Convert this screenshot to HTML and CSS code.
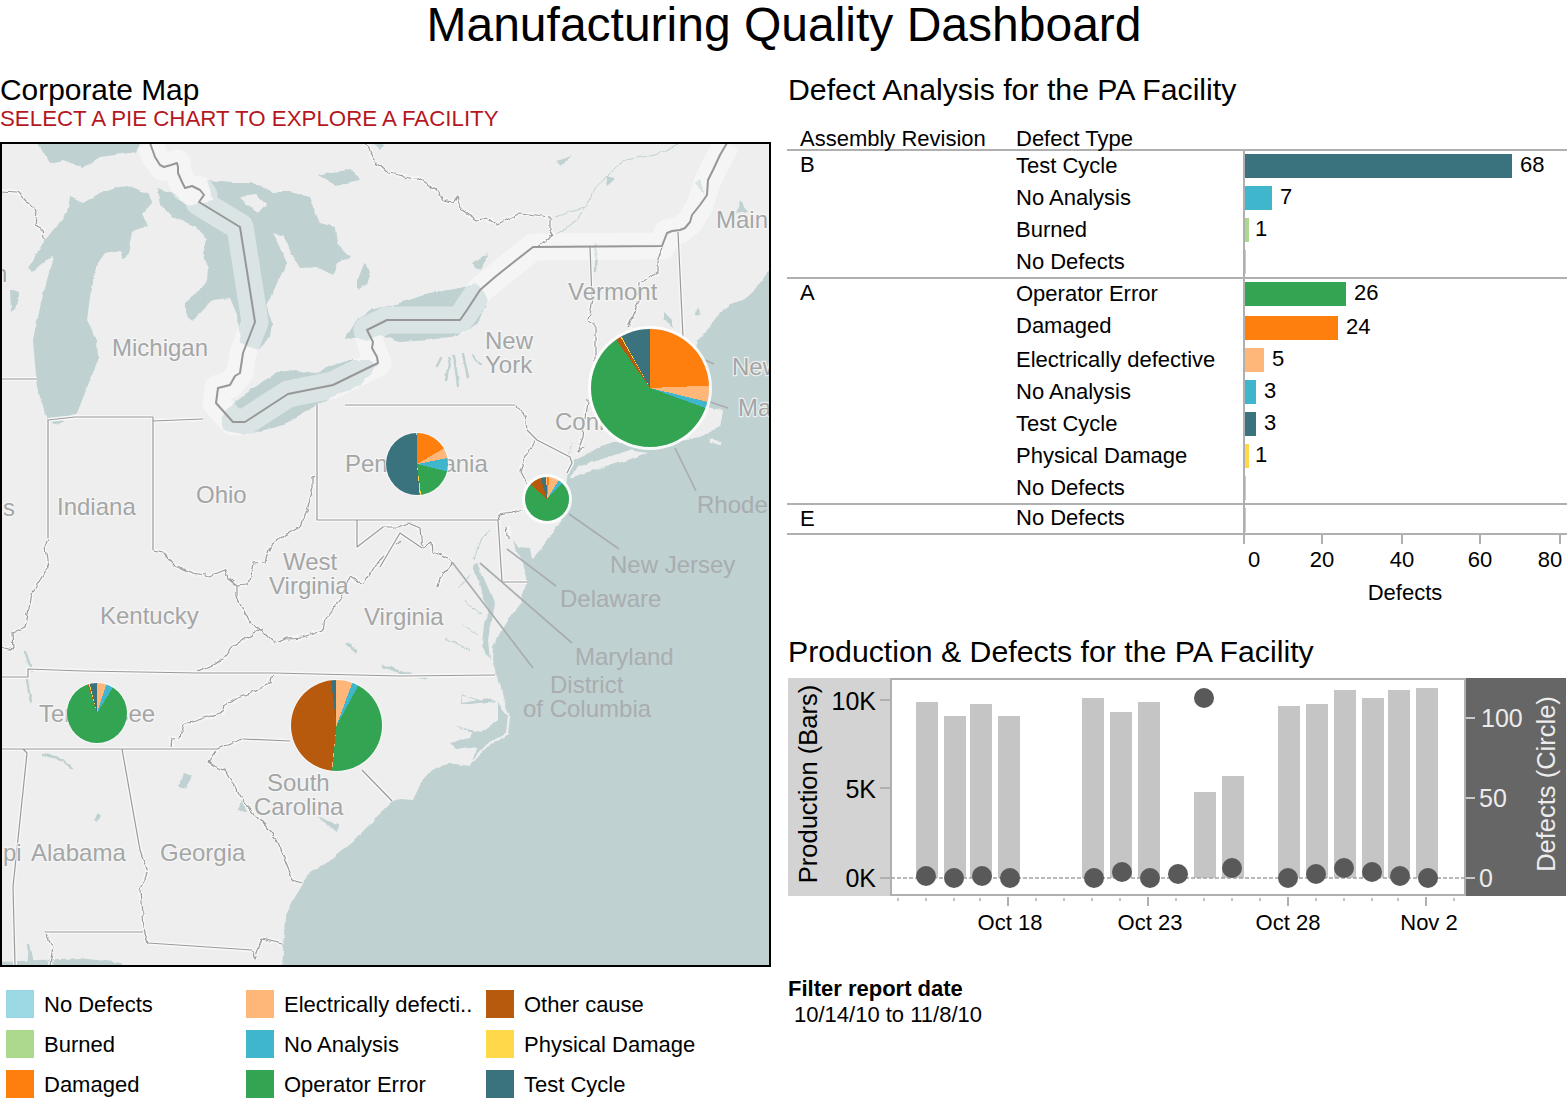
FILE: index.html
```html
<!DOCTYPE html>
<html lang="en">
<head>
<meta charset="utf-8">
<title>Manufacturing Quality Dashboard</title>
<link rel="stylesheet" href="styles.css">
</head>
<body>
<h1 class="page-title">Manufacturing Quality Dashboard</h1>
<main class="dashboard">
  <section class="left">
    <h2 class="section-title">Corporate Map</h2>
    <p class="subtitle">SELECT A PIE CHART TO EXPLORE A FACILITY</p>
    <div class="map">
      <svg class="map-svg" viewBox="2 144 767 821" width="767" height="821" aria-label="Map">
        <defs>
          <filter id="wiggle" filterUnits="userSpaceOnUse" x="-10" y="130" width="790" height="850">
            <feTurbulence type="fractalNoise" baseFrequency="0.11" numOctaves="2" seed="4"/>
            <feDisplacementMap in="SourceGraphic" scale="6" xChannelSelector="R" yChannelSelector="G"/>
          </filter>
          <filter id="wiggle-soft" filterUnits="userSpaceOnUse" x="-10" y="130" width="790" height="850">
            <feTurbulence type="fractalNoise" baseFrequency="0.09" numOctaves="3" seed="9"/>
            <feDisplacementMap in="SourceGraphic" scale="4" xChannelSelector="R" yChannelSelector="G"/>
          </filter>
        </defs>
        <rect class="land" x="0" y="140" width="775" height="830"/>
        <g class="soft">
          <path class="water" d="M775,268 L768,272 L757,287 L743,300 L733,303 L723,310 L716,320 L710,327 L697,340 L700,370 L705,407 L723,410 L720,427 L700,437 L680,440 L640,440 L625,443 L607,443 L570,463 L567,478 L562,520 L553,533 L540,550 L532,559 L530,548 L520,547 L513,542 L518,552 L523,563 L527,583 L520,603 L503,627 L493,647 L492,660 L503,697 L510,717 L508,735 L487,747 L470,766 L450,763 L435,768 L420,785 L413,800 L400,799 L392,802 L377,817 L367,827 L353,842 L333,858 L310,873 L295,897 L285,917 L282,970 L780,970 L780,268 Z"/>
          <path class="land" d="M570,478 L577,467 L630,450 L647,453 L625,461 L600,468 Z M708,439 L722,441 L721,444 L710,443 Z"/>
          <!-- Lake Superior and small northern lakes -->
          <path class="water" d="M38,143 L140,143 L137,152 L100,157 L83,168 L63,160 L50,163 Z M373,143 L385,143 L380,150 Z M10,290 L19,293 L15,310 L11,312 Z"/>
          <!-- Lake Michigan -->
          <path class="water" d="M70,197 L67,212 L43,243 L28,268 L33,272 L53,255 L47,280 L40,307 L33,340 L37,387 L47,420 L57,425 L77,413 L98,360 L97,340 L87,320 L90,297 L98,263 L105,253 L120,250 L123,260 L128,253 L132,232 L148,225 L142,215 L153,203 L147,193 L127,185 L100,193 L83,203 Z"/>
          <!-- Lake Huron -->
          <path class="water" d="M157,188 L173,193 L187,205 L213,200 L207,180 L233,182 L253,182 L273,192 L290,192 L310,197 L320,223 L335,227 L337,243 L350,257 L337,263 L333,275 L317,267 L300,268 L293,257 L285,237 L273,233 L287,263 L277,283 L267,307 L272,323 L270,337 L257,350 L240,343 L238,317 L230,298 L213,300 L203,310 L193,322 L185,313 L185,303 L197,293 L207,280 L208,267 L203,253 L207,240 L197,227 L173,217 L160,205 Z"/>
          <path class="land" d="M240,197 L256,195 L266,204 L258,213 L248,206 Z"/>
          <path class="water" d="M318,175 L330,172 L352,170 L360,180 L345,183 L335,185 Z M358,280 L365,262 L370,275 L367,285 L358,290 Z"/>
          <!-- Lake Erie -->
          <path class="water" d="M232,405 L257,385 L278,372 L295,370 L315,373 L345,360 L368,360 L378,365 L360,385 L330,398 L317,405 L283,425 L245,435 L222,430 L222,418 Z"/>
          <!-- Lake Ontario -->
          <path class="water" d="M345,338 L355,322 L370,310 L400,303 L430,293 L460,288 L477,283 L488,300 L477,325 L457,336 L430,340 L400,342 L380,335 L367,340 Z"/>
          <!-- Inland lakes -->
          <path class="water" d="M482,270 L488,253 L472,263 L474,268 Z M605,176 L615,178 L607,185 Z M572,156 L560,165 L555,160 Z M664,312 L672,320 L672,328 L664,318 Z M700,180 L705,195 L695,184 Z M740,200 L748,212 L736,214 Z M697,307 L702,315 L696,314 Z M178,786 L184,773 L192,776 L186,788 Z M93,820 L98,813 L102,816 L96,822 Z M318,817 L328,822 L338,824 L337,832 L328,826 Z M237,811 L243,800 L247,812 Z"/>
          <path class="water" d="M473,565 L477,563 L489,590 L495,605 L491,625 L488,640 L490,660 L482,645 L484,625 L488,610 L481,590 Z"/>
          <path class="water" d="M498,703 L508,715 L506,733 L487,744 L472,760 L477,748 L470,747 L457,750 L450,743 L470,738 L472,733 L452,725 L470,730 L483,732 L498,720 Z M462,690 L463,703 L487,698 L497,703 L487,702 L470,704 L462,704 Z M0,962 L40,960 L80,958 L122,963 L120,970 L0,970 Z M27,962 L30,945 L34,962 Z"/>
          <path class="stream" d="M437,366 L441,358 M446,380 L450,358 M458,385 L454,356 M468,378 L463,354 M480,364 L472,356 M590,248 L590,275 M596,245 L595,272 M25,652 L32,672 M27,680 L31,702 M43,755 L60,758 L72,768 M383,666 L400,672 L425,678 M347,644 L356,652 M28,945 L32,965"/>
          <path class="stream-thin" d="M555,217 L570,212 L585,208 M555,235 L575,222 L585,208 L597,185 L625,160 L655,155 L680,143 M568,456 L572,443 M490,530 L480,540 L474,560 M470,575 L458,588 M465,600 L482,615 M445,638 L470,650 M462,625 L478,635 M462,695 L478,700"/>
        </g>
        <!-- International border glow -->
        <path class="intl-glow" d="M150,143 L155,157 L163,167 L177,163 L178,173 L185,188 L200,190 L204,195 L199,202 L240,227 L255,322 L243,353 L240,373 L230,385 L218,388 L216,403 L233,422 L245,422 L288,394 L333,385 L378,363 L372,348 L367,330 L387,320 L460,320 L480,290 L533,247 L662,246 L667,233 L680,230 L690,222 L700,205 L708,180 L713,170 L727,143"/>
        <!-- River state borders -->
        <g class="wavy">
          <path class="state-glow" d="M48,538 L45,547 L48,567 L32,593 L28,615 L25,627 L12,633 L13,650 L0,647 M153,550 L163,552 L175,565 L193,573 L210,576 L225,570 L228,578 L237,585 L248,584 L253,563 L265,562 L270,547 L282,537 L300,527 L307,510 L313,488 L313,477 L317,476 M515,405 L525,415 L527,430 M537,438 L525,457 L520,472 L527,485 M498,520 L500,515 L513,513 L523,510 M507,527 L508,537 M383,527 L398,527 L408,523 L420,528 L422,548 M400,540 L375,565 L363,585 L350,577 L340,598 L325,620 L323,630 L303,637 L287,638 L275,643 L262,630 L250,623 L237,597 V585 M262,628 L233,647 L223,660 L197,672 M422,548 L432,542 L433,552 L448,558 L452,563 L440,577 L438,587 M273,673 L270,683 L250,693 L227,703 L223,712 L183,725 L180,737 L172,738 L171,748 M217,749 L208,762 L227,773 L240,797 L263,823 L277,840 L293,880 L302,883 M217,749 L243,739 M140,850 L148,873 L140,890 L143,927 L148,943 M252,950 L255,959 L258,950 L262,939 L282,944 M45,932 L53,947 L50,965 M365,143 L377,163 L388,173 L417,178 L437,190 L443,200 L453,202 L457,198 L462,210 L477,220 L487,218 L497,225 L520,213 L550,217 V230 L553,235 L537,247 M0,191 L17,192 L27,202 L37,212 L35,225 L42,228 L43,240 M592,300 L588,320 L595,323 V360 M662,247 L658,260 V273 L640,283 L638,303 L628,327 M587,400 L583,437 L577,453 L585,447"/>
          <path class="state-line" d="M48,538 L45,547 L48,567 L32,593 L28,615 L25,627 L12,633 L13,650 L0,647 M153,550 L163,552 L175,565 L193,573 L210,576 L225,570 L228,578 L237,585 L248,584 L253,563 L265,562 L270,547 L282,537 L300,527 L307,510 L313,488 L313,477 L317,476 M515,405 L525,415 L527,430 M537,438 L525,457 L520,472 L527,485 M498,520 L500,515 L513,513 L523,510 M507,527 L508,537 M383,527 L398,527 L408,523 L420,528 L422,548 M400,540 L375,565 L363,585 L350,577 L340,598 L325,620 L323,630 L303,637 L287,638 L275,643 L262,630 L250,623 L237,597 V585 M262,628 L233,647 L223,660 L197,672 M422,548 L432,542 L433,552 L448,558 L452,563 L440,577 L438,587 M273,673 L270,683 L250,693 L227,703 L223,712 L183,725 L180,737 L172,738 L171,748 M217,749 L208,762 L227,773 L240,797 L263,823 L277,840 L293,880 L302,883 M217,749 L243,739 M140,850 L148,873 L140,890 L143,927 L148,943 M252,950 L255,959 L258,950 L262,939 L282,944 M45,932 L53,947 L50,965 M365,143 L377,163 L388,173 L417,178 L437,190 L443,200 L453,202 L457,198 L462,210 L477,220 L487,218 L497,225 L520,213 L550,217 V230 L553,235 L537,247 M0,191 L17,192 L27,202 L37,212 L35,225 L42,228 L43,240 M592,300 L588,320 L595,323 V360 M662,247 L658,260 V273 L640,283 L638,303 L628,327 M587,400 L583,437 L577,453 L585,447"/>
        </g>
        <!-- Surveyed state borders -->
        <path class="state-glow" d="M0,379 H37 M48,420 V538 M48,420 L75,417 H153 M153,421 L203,419 M153,417 V550 M317,405 V520 H498 M345,405 H515 M527,430 L537,440 L570,457 L572,463 L567,473 M498,520 L502,582 H527 M357,520 V547 L383,527 M422,548 L400,533 L380,567 M0,677 H28 V669 L83,671 L197,673 L273,673 L400,676 L495,675 M0,749 H217 M243,739 L290,741 M362,770 L392,801 M23,749 L27,753 L13,887 L15,965 M122,749 L140,850 M148,943 L252,950 M45,932 H143 M678,232 L683,337 M590,247 L592,300"/>
        <path class="state-line" d="M0,379 H37 M48,420 V538 M48,420 L75,417 H153 M153,421 L203,419 M153,417 V550 M317,405 V520 H498 M345,405 H515 M527,430 L537,440 L570,457 L572,463 L567,473 M498,520 L502,582 H527 M357,520 V547 L383,527 M422,548 L400,533 L380,567 M0,677 H28 V669 L83,671 L197,673 L273,673 L400,676 L495,675 M0,749 H217 M243,739 L290,741 M362,770 L392,801 M23,749 L27,753 L13,887 L15,965 M122,749 L140,850 M148,943 L252,950 M45,932 H143 M678,232 L683,337 M590,247 L592,300"/>
        <!-- International border -->
        <path class="intl-line" d="M150,143 L155,157 L160,165 L164,167 L171,165 L177,163 L178,167 L178,173 L182,182 L185,188 L192,186 L200,190 L204,195 L199,202 L240,227 L255,322 L243,353 L240,373 L235,376 L230,385 L218,388 L216,403 L233,422 L245,422 L288,394 L333,385 L378,363 L377,357 L372,348 L373,342 L367,330 L387,320 L460,320 L467,310 L480,290 L495,277 L510,265 L533,247 L662,246 L667,233 L672,231 L680,230 L685,228 L690,222 L692,215 L700,205 L707,195 L708,180 L713,170 L720,155 L727,143"/>
        <!-- Leader lines -->
        <path class="leader" d="M675,448 L696,491 M569,514 L619,549 M507,549 L556,586 M480,563 L572,643 M452,562 L533,668 M705,360 L714,364 M710,402 L728,408"/>
        <!-- Labels -->
        <text class="place" x="112" y="356">Michigan</text>
        <text class="place" x="-6" y="282">n</text>
        <text class="place" x="3" y="516">s</text>
        <text class="place" x="57" y="515">Indiana</text>
        <text class="place" x="196" y="503">Ohio</text>
        <text class="place" x="345" y="472">Pennsylvania</text>
        <text class="place" x="485" y="349">New</text>
        <text class="place" x="485" y="373">York</text>
        <text class="place" x="568" y="300">Vermont</text>
        <text class="place" x="716" y="228">Maine</text>
        <text class="place" x="555" y="430">Connecticut</text>
        <text class="place" x="732" y="375">New</text>
        <text class="place" x="738" y="416">Mas</text>
        <text class="place sea-label" x="697" y="513">Rhode</text>
        <text class="place sea-label" x="610" y="573">New Jersey</text>
        <text class="place sea-label" x="560" y="607">Delaware</text>
        <text class="place sea-label" x="575" y="665">Maryland</text>
        <text class="place sea-label" x="550" y="693">District</text>
        <text class="place sea-label" x="523" y="717">of Columbia</text>
        <text class="place" x="283" y="570">West</text>
        <text class="place" x="269" y="594">Virginia</text>
        <text class="place" x="100" y="624">Kentucky</text>
        <text class="place" x="364" y="625">Virginia</text>
        <text class="place" x="39" y="722">Tennessee</text>
        <text class="place" x="267" y="791">South</text>
        <text class="place" x="254" y="815">Carolina</text>
        <text class="place" x="3" y="861">pi</text>
        <text class="place" x="31" y="861">Alabama</text>
        <text class="place" x="160" y="861">Georgia</text>
      </svg>
      <div class="pie pie-ny"></div>
      <div class="pie pie-pa"></div>
      <div class="pie pie-nj"></div>
      <div class="pie pie-tn"></div>
      <div class="pie pie-nc"></div>
    </div>
    <ul class="legend">
      <li class="legend-item"><span class="swatch c-nodefects"></span>No Defects</li>
      <li class="legend-item"><span class="swatch c-electric"></span>Electrically defecti..</li>
      <li class="legend-item"><span class="swatch c-other"></span>Other cause</li>
      <li class="legend-item"><span class="swatch c-burned"></span>Burned</li>
      <li class="legend-item"><span class="swatch c-noanalysis"></span>No Analysis</li>
      <li class="legend-item"><span class="swatch c-physical"></span>Physical Damage</li>
      <li class="legend-item"><span class="swatch c-damaged"></span>Damaged</li>
      <li class="legend-item"><span class="swatch c-operator"></span>Operator Error</li>
      <li class="legend-item"><span class="swatch c-testcycle"></span>Test Cycle</li>
    </ul>
  </section>

  <section class="right">
    <h2 class="section-title wide">Defect Analysis for the PA Facility</h2>
    <div class="table-head">
      <span class="col-rev">Assembly Revision</span>
      <span class="col-type">Defect Type</span>
    </div>
    <div class="table">
      <div class="group">
        <div class="rev">B</div>
        <div class="rows">
          <div class="row"><span class="name">Test Cycle</span><span class="plot"><span class="bar c-testcycle w68"></span><span class="val">68</span></span></div>
          <div class="row"><span class="name">No Analysis</span><span class="plot"><span class="bar c-noanalysis w7"></span><span class="val">7</span></span></div>
          <div class="row"><span class="name">Burned</span><span class="plot"><span class="bar c-burned w1"></span><span class="val val-near">1</span></span></div>
          <div class="row row-end"><span class="name">No Defects</span><span class="plot"><span class="bar c-nodefects w0"></span></span></div>
        </div>
      </div>
      <div class="group">
        <div class="rev">A</div>
        <div class="rows">
          <div class="row"><span class="name">Operator Error</span><span class="plot"><span class="bar c-operator w26"></span><span class="val">26</span></span></div>
          <div class="row row-tall"><span class="name">Damaged</span><span class="plot"><span class="bar c-damaged w24"></span><span class="val">24</span></span></div>
          <div class="row"><span class="name">Electrically defective</span><span class="plot"><span class="bar c-electric w5"></span><span class="val">5</span></span></div>
          <div class="row"><span class="name">No Analysis</span><span class="plot"><span class="bar c-noanalysis w3"></span><span class="val">3</span></span></div>
          <div class="row"><span class="name">Test Cycle</span><span class="plot"><span class="bar c-testcycle w3"></span><span class="val">3</span></span></div>
          <div class="row"><span class="name">Physical Damage</span><span class="plot"><span class="bar c-physical w1"></span><span class="val val-near">1</span></span></div>
          <div class="row row-end"><span class="name">No Defects</span><span class="plot"><span class="bar c-nodefects w0"></span></span></div>
        </div>
      </div>
      <div class="group">
        <div class="rev">E</div>
        <div class="rows">
          <div class="row row-short"><span class="name">No Defects</span><span class="plot"><span class="bar c-nodefects w0"></span></span></div>
        </div>
      </div>
    </div>
    <svg class="axis-svg" viewBox="788 535 780 72" width="780" height="72" aria-label="Defects axis">
      <path class="tick" d="M1244,534 V544 M1322,534 V544 M1402,534 V544 M1480,534 V544 M1560,534 V544"/>
      <text class="lbl mid" x="1254" y="567">0</text>
      <text class="lbl mid" x="1322" y="567">20</text>
      <text class="lbl mid" x="1402" y="567">40</text>
      <text class="lbl mid" x="1480" y="567">60</text>
      <text class="lbl mid" x="1550" y="567">80</text>
      <text class="lbl mid" x="1405" y="600">Defects</text>
    </svg>
    <h2 class="section-title wide second">Production &amp; Defects for the PA Facility</h2>
    <svg class="prod-svg" viewBox="788 678 780 262" width="780" height="262" aria-label="Production and defects">
      <rect class="panel-left" x="788" y="678" width="102" height="218"/>
      <rect class="panel-right" x="1466" y="678" width="100" height="218"/>
      <rect class="plot-box" x="891" y="679" width="574" height="216"/>
      <path class="tick" d="M880,700 H890 M880,788 H890 M880,878 H890"/>
      <path class="tick-r" d="M1466,718 H1475 M1466,798 H1475 M1466,878 H1475"/>
      <g class="prod-bars">
        <rect x="916" y="702" width="22" height="176"/>
        <rect x="944" y="716" width="22" height="162"/>
        <rect x="970" y="704" width="22" height="174"/>
        <rect x="998" y="716" width="22" height="162"/>
        <rect x="1082" y="698" width="22" height="180"/>
        <rect x="1110" y="712" width="22" height="166"/>
        <rect x="1138" y="702" width="22" height="176"/>
        <rect x="1194" y="792" width="22" height="86"/>
        <rect x="1222" y="776" width="22" height="102"/>
        <rect x="1278" y="706" width="22" height="172"/>
        <rect x="1306" y="704" width="22" height="174"/>
        <rect x="1334" y="690" width="22" height="188"/>
        <rect x="1362" y="698" width="22" height="180"/>
        <rect x="1388" y="690" width="22" height="188"/>
        <rect x="1416" y="688" width="22" height="190"/>
      </g>
      <path class="zero" d="M891,878 H1465"/>
      <g class="dots">
        <circle cx="926" cy="876" r="10"/><circle cx="954" cy="878" r="10"/><circle cx="982" cy="876" r="10"/><circle cx="1010" cy="878" r="10"/>
        <circle cx="1094" cy="878" r="10"/><circle cx="1122" cy="872" r="10"/><circle cx="1150" cy="878" r="10"/><circle cx="1178" cy="874" r="10"/>
        <circle cx="1204" cy="698" r="10"/><circle cx="1232" cy="868" r="10"/><circle cx="1288" cy="878" r="10"/><circle cx="1316" cy="874" r="10"/>
        <circle cx="1344" cy="868" r="10"/><circle cx="1372" cy="872" r="10"/><circle cx="1400" cy="876" r="10"/><circle cx="1428" cy="878" r="10"/>
      </g>
      <text class="lbl big end" x="876" y="710">10K</text>
      <text class="lbl big end" x="876" y="798">5K</text>
      <text class="lbl big end" x="876" y="887">0K</text>
      <text class="lbl axis-title mid" transform="translate(817 784) rotate(-90)">Production (Bars)</text>
      <text class="lbl big light" x="1481" y="727">100</text>
      <text class="lbl big light" x="1479" y="807">50</text>
      <text class="lbl big light" x="1479" y="887">0</text>
      <text class="lbl axis-title light mid" transform="translate(1555 784) rotate(-90)">Defects (Circle)</text>
      <path class="tick-major" d="M1008,897 V906 M1148,897 V906 M1288,897 V906 M1426,897 V906"/>
      <path class="tick-minor" d="M898,898 V901 M926,898 V901 M954,898 V901 M980,898 V901 M1036,898 V901 M1064,898 V901 M1092,898 V901 M1120,898 V901 M1176,898 V901 M1204,898 V901 M1232,898 V901 M1260,898 V901 M1316,898 V901 M1344,898 V901 M1372,898 V901 M1398,898 V901 M1454,898 V901"/>
      <text class="lbl mid" x="1010" y="930">Oct 18</text>
      <text class="lbl mid" x="1150" y="930">Oct 23</text>
      <text class="lbl mid" x="1288" y="930">Oct 28</text>
      <text class="lbl mid" x="1429" y="930">Nov 2</text>
    </svg>
    <div class="filter">
      <div class="filter-title">Filter report date</div>
      <div class="filter-range">10/14/10 to 11/8/10</div>
    </div>
  </section>
</main>
</body>
</html>
```

FILE: styles.css
```css
* { box-sizing: border-box; }
html, body { margin: 0; padding: 0; background: #fff; }
body {
  width: 1568px;
  height: 1108px;
  overflow: hidden;
  font-family: "Liberation Sans", Arial, sans-serif;
  font-size: 22px;
  color: #000;
}
.page-title {
  margin: 0;
  height: 72px;
  font-size: 48px;
  line-height: 50px;
  font-weight: 400;
  text-align: center;
}
.dashboard { display: flex; }
.left { width: 788px; flex: none; }
.right { width: 780px; flex: none; }
.section-title {
  margin: 0;
  font-size: 29.9px;
  line-height: 36px;
  font-weight: 400;
  white-space: nowrap;
}
.wide { font-size: 30.25px; }
.subtitle {
  margin: 0;
  height: 34px;
  font-size: 22.3px;
  line-height: 22px;
  color: #b5171f;
  white-space: nowrap;
}

/* Map */
.map {
  position: relative;
  width: 771px;
  height: 825px;
  border: 2px solid #000;
  overflow: hidden;
}
.map-svg { display: block; }
.land { fill: #eeeeee; }
.water { fill: #c0d1d2; }
.soft { filter: url(#wiggle-soft); }
.wavy { filter: url(#wiggle); }
.stream { fill: none; stroke: #c0d1d2; stroke-width: 2.4; stroke-linecap: round; }
.stream-thin { fill: none; stroke: #c0d1d2; stroke-width: 1; }
.intl-glow { fill: none; stroke: #fff; stroke-opacity: .42; stroke-width: 27; stroke-linejoin: round; }
.intl-line { fill: none; stroke: #979797; stroke-width: 2; stroke-linejoin: round; }
.state-glow { fill: none; stroke: #f8f8f8; stroke-width: 4; stroke-linejoin: round; }
.state-line { fill: none; stroke: #9a9a9a; stroke-width: 1.2; stroke-linejoin: round; }
.leader { fill: none; stroke: #a9adaf; stroke-width: 1.7; }
.place {
  font-size: 24px;
  fill: #a4a6a6;
  stroke: #f7f7f7;
  stroke-width: 2.5;
  stroke-opacity: .8;
  paint-order: stroke;
}
.sea-label { fill: #a9adaf; stroke: none; }

.pie { position: absolute; border-radius: 50%; }
.pie-ny {
  left: 588.5px; top: 185.3px; width: 118px; height: 118px;
  box-shadow: 0 0 0 3px rgba(255,255,255,.85);
  background: conic-gradient(#ff7f0e 0 87.7deg, #ffb779 87.7deg 103.6deg, #3fb6cc 103.6deg 109.8deg, #32a452 109.8deg 325deg, #b85a0d 325deg 330deg, #ffd94a 330deg 331deg, #3a737d 331deg 360deg);
}
.pie-pa {
  left: 384px; top: 289px; width: 62px; height: 62px;
  box-shadow: 0 0 0 1px rgba(255,255,255,.6);
  background: conic-gradient(#ff7f0e 0 60deg, #ffb779 60deg 79deg, #3fb6cc 79deg 104deg, #32a452 104deg 172.6deg, #ffd94a 172.6deg 175deg, #3a737d 175deg 359deg, #9bd9e5 359deg 360deg);
}
.pie-nj {
  left: 523.3px; top: 333.3px; width: 44px; height: 44px;
  box-shadow: 0 0 0 3px rgba(255,255,255,.85);
  background: conic-gradient(#ff7f0e 0 6deg, #ffb779 6deg 32deg, #3fb6cc 32deg 44deg, #32a452 44deg 311deg, #b85a0d 311deg 343deg, #3a737d 343deg 358deg, #ffb779 358deg 360deg);
}
.pie-tn {
  left: 64.7px; top: 539.3px; width: 60px; height: 60px;
  box-shadow: 0 0 0 1px rgba(255,255,255,.6);
  background: conic-gradient(#ffb779 0 18deg, #3fb6cc 18deg 32deg, #32a452 32deg 342deg, #b85a0d 342deg 344deg, #ffd94a 344deg 346deg, #3a737d 346deg 360deg);
}
.pie-nc {
  left: 288.5px; top: 535.5px; width: 91px; height: 91px;
  box-shadow: 0 0 0 1px rgba(255,255,255,.6);
  background: conic-gradient(#ffb779 0 20.3deg, #3fb6cc 20.3deg 28.7deg, #32a452 28.7deg 185.5deg, #ffb779 185.5deg 186.3deg, #b85a0d 186.3deg 353deg, #3a737d 353deg 360deg);
}

/* Legend */
.legend {
  list-style: none;
  margin: 23px 0 0 6px;
  padding: 0;
  display: grid;
  grid-template-columns: repeat(3, 240px);
  grid-auto-rows: 40px;
}
.legend-item { display: flex; align-items: flex-start; line-height: 30px; white-space: nowrap; }
.swatch { width: 28px; height: 28px; margin-right: 10px; flex: none; }
.c-nodefects { background: #9bd9e5; }
.c-electric { background: #ffb779; }
.c-other { background: #b85a0d; }
.c-burned { background: #acd98d; }
.c-noanalysis { background: #3fb6cc; }
.c-physical { background: #ffd94a; }
.c-damaged { background: #ff7f0e; }
.c-operator { background: #32a452; }
.c-testcycle { background: #3a737d; }

/* Defect table */
.table-head {
  display: flex;
  height: 41px;
  padding-top: 20px;
  padding-left: 12px;
  line-height: 22px;
}
.col-rev { width: 216px; }
.table { width: 780px; border-top: 2px solid #b0b0b0; margin-left: -1px; }
.group { display: flex; border-bottom: 2px solid #b0b0b0; }
.rev { width: 229px; flex: none; padding-left: 13px; line-height: 28px; }
.rows { flex: 1; }
.row { display: flex; height: 32px; }
.row-tall { height: 34px; }
.row-end { height: 30px; }
.row-short { height: 28px; }
.name { width: 228px; flex: none; line-height: 30px; white-space: nowrap; }
.row-short .name { line-height: 26px; }
.plot {
  flex: 1;
  display: flex;
  align-items: flex-start;
  box-shadow: -1px 0 0 #b0b0b0;
  border-left: 1px solid #b0b0b0;
}
.bar { height: 24px; margin-top: 3px; flex: none; }
.row-tall .bar { margin-top: 5px; }
.w68 { width: 267px; } .w26 { width: 101px; } .w24 { width: 93px; }
.w7 { width: 27px; } .w5 { width: 19px; } .w3 { width: 11px; }
.w1 { width: 4px; } .w0 { width: 1px; }
.val { margin-left: 8px; line-height: 27px; }
.row-tall .val { line-height: 31px; }
.val-near { margin-left: 6px; }

/* Charts */
.axis-svg, .prod-svg { display: block; overflow: hidden; }
.tick { fill: none; stroke: #b0b0b0; stroke-width: 2; }
.tick-r { fill: none; stroke: #c9c9c9; stroke-width: 2; }
.tick-major { fill: none; stroke: #b0b0b0; stroke-width: 2; }
.tick-minor { fill: none; stroke: #aaa; stroke-width: 1.4; }
.lbl { font-size: 22px; fill: #000; }
.big { font-size: 25px; }
.axis-title { font-size: 25.5px; }
.mid { text-anchor: middle; }
.end { text-anchor: end; }
.light { fill: #ececec; }
.panel-left { fill: #d3d3d3; }
.panel-right { fill: #666; }
.plot-box { fill: #fff; stroke: #b0b0b0; stroke-width: 2; }
.prod-bars { fill: #c5c5c5; }
.zero { fill: none; stroke: #a3a3a3; stroke-width: 1.4; stroke-dasharray: 4 2; }
.dots { fill: #595959; }
.second { margin-top: 25px; padding-top: 2px; height: 46px; }
.filter { margin-top: 36px; line-height: 26px; }
.filter-title { font-weight: 700; }
.filter-range { padding-left: 6px; }
```
